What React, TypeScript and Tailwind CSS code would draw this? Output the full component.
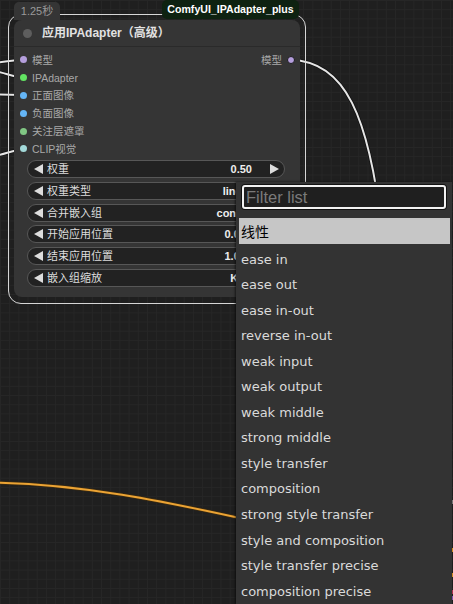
import React from "react";

const inputs = [
  { label: "模型", dot: "bg-[#b59fdd]" },
  { label: "IPAdapter", dot: "bg-[#62e462]" },
  { label: "正面图像", dot: "bg-[#64b5f6]" },
  { label: "负面图像", dot: "bg-[#64b5f6]" },
  { label: "关注层遮罩", dot: "bg-[#81c784]" },
  { label: "CLIP视觉", dot: "bg-[#a3d9d9]" },
];

const widgets = [
  { label: "权重", value: "0.50" },
  { label: "权重类型", value: "linear" },
  { label: "合并嵌入组", value: "concat" },
  { label: "开始应用位置", value: "0.000" },
  { label: "结束应用位置", value: "1.000" },
  { label: "嵌入组缩放", value: "K+V" },
];

const options = [
  "ease in",
  "ease out",
  "ease in-out",
  "reverse in-out",
  "weak input",
  "weak output",
  "weak middle",
  "strong middle",
  "style transfer",
  "composition",
  "strong style transfer",
  "style and composition",
  "style transfer precise",
  "composition precise",
];

function Wires() {
  return (
    <svg className="absolute inset-0 h-full w-full" viewBox="0 0 453 604" fill="none">
      {/* input links coming from the left */}
      <g strokeLinecap="round">
        {[
          "M-4 62.5 C6 62, 12 60, 23 60",
          "M-4 71.5 C6 73, 12 77, 23 77.5",
          "M-4 94.5 L23 95",
          "M-4 155.5 C6 154, 12 150, 23 149.5",
        ].map((d) => (
          <g key={d}>
            <path d={d} stroke="#111" strokeWidth="3.5" />
            <path d={d} stroke="#e6e6e6" strokeWidth="2" />
          </g>
        ))}
        <path d="M291 60 C345 61, 369 116, 382 230" stroke="#111" strokeWidth="3.5" />
        <path d="M291 60 C345 61, 369 116, 382 230" stroke="#e6e6e6" strokeWidth="2" />
        <path d="M-6 482.5 C80 484, 160 500, 262 523" stroke="#3a2a10" strokeWidth="3.5" />
        <path d="M-6 482.5 C80 484, 160 500, 262 523" stroke="#eba334" strokeWidth="2" />
      </g>
    </svg>
  );
}

function LeftArrow() {
  return (
    <svg width="9" height="10" viewBox="0 0 9 10" className="shrink-0">
      <polygon points="9,0 9,10 0,5" fill="#dddddd" />
    </svg>
  );
}

function RightArrow() {
  return (
    <svg width="9" height="10" viewBox="0 0 9 10" className="shrink-0">
      <polygon points="0,0 0,10 9,5" fill="#dddddd" />
    </svg>
  );
}

function Node() {
  return (
    <>
      {/* selection outline */}
      <div className="absolute left-[8px] top-[14px] h-[290px] w-[298px] rounded-[13px] border border-[#d6d6d6]" />

      {/* execution time badge */}
      <div className="absolute left-[14px] top-[2px] flex h-[18px] w-[46px] items-center justify-center rounded-t-[5px] bg-[#353535] text-[11px] text-[#9a9a9a]">
        1.25秒
      </div>

      {/* source badge */}
      <div className="absolute left-[162px] top-0 flex h-[19px] w-[137px] items-center justify-center rounded-[5px] bg-[#0e2211] text-[10.6px] font-bold text-white">
        ComfyUI_IPAdapter_plus
      </div>

      <div className="absolute left-[14px] top-[20px] flex h-[277px] w-[286px] flex-col rounded-[8px] bg-[#353535]">
        <div className="flex h-[27px] shrink-0 items-center gap-[10px] border-b border-[#2a2a2a] pl-[9px]">
          <span className="h-[9px] w-[9px] rounded-full bg-[#5e5e5e]" />
          <span className="text-[12px] font-bold text-[#e2e2e2]">应用IPAdapter（高级）</span>
        </div>

        <div className="flex justify-between pt-[4px]">
          <div className="flex flex-col">
            {inputs.map((i) => (
              <div key={i.label} className="flex h-[17.8px] items-center gap-[5.5px] pl-[5.5px]">
                <span className={`h-[7px] w-[7px] rounded-full ${i.dot}`} />
                <span className="text-[10.5px] leading-[14px] text-[#a8a8a8]">{i.label}</span>
              </div>
            ))}
          </div>
          <div className="flex h-[17.8px] items-center gap-[5px] pr-[5px]">
            <span className="text-[10.5px] leading-[14px] text-[#a8a8a8]">模型</span>
            <span className="h-[8px] w-[8px] rounded-full border border-[#1a1a1a] bg-[#b59fdd]" />
          </div>
        </div>

        <div className="mt-[2.2px] flex flex-col gap-[3.8px] pl-[13px] pr-[15px]">
          {widgets.map((w) => (
            <div
              key={w.label}
              className="flex h-[18px] items-center rounded-full border border-[#575757] bg-[#222222] pl-[6px] pr-[5px]"
            >
              <LeftArrow />
              <span className="ml-[4px] text-[11px] leading-[14px] text-[#dddddd]">{w.label}</span>
              <span className="ml-auto mr-[18px] text-[11px] leading-[14px] font-semibold text-[#eeeeee]">{w.value}</span>
              <RightArrow />
            </div>
          ))}
        </div>
      </div>
    </>
  );
}

function Menu() {
  return (
    <div className="absolute bottom-0 left-[236px] top-[182px] w-[216px] overflow-hidden bg-[#333333] shadow-[-1px_0_2px_rgba(0,0,0,0.6)] font-['DejaVu_Sans','Noto_Sans_CJK_SC',sans-serif]">
      <div className="ml-[6px] mt-[3px] flex h-[24px] w-[204px] items-center rounded-[3px] border-2 border-[#f2f2f2] bg-[#1f1f1f] pl-[2px] font-['Liberation_Sans',sans-serif] text-[16.5px] leading-[18px] text-[#7a7a7a] shadow-[0_0_0_1px_#111]">
        Filter list
      </div>
      <div className="mt-[9px] flex flex-col pl-[3px] pr-[2px]">
        <div className="flex h-[25.5px] items-center bg-[#c6c6c6] pl-[2px] font-['Noto_Sans_CJK_SC',sans-serif] text-[14px] leading-[18px] text-black">
          线性
        </div>
        <div className="mt-[3px] flex flex-col">
          {options.map((o) => (
            <div key={o} className="h-[25.55px] pl-[2px] text-[13px] leading-[25px] text-[#dadada]">
              {o}
            </div>
          ))}
        </div>
      </div>
    </div>
  );
}

export default function App() {
  return (
    <div className="relative h-[604px] w-full overflow-hidden bg-[#1f1f1f] bg-[linear-gradient(to_right,#262626_1px,transparent_1px),linear-gradient(to_bottom,#262626_1px,transparent_1px)] bg-[size:9.2px_9.2px] font-['Liberation_Sans','Noto_Sans_CJK_SC',sans-serif]">
      <Wires />
      <Node />
      <Menu />
      {/* bits of another node peeking at the right edge */}
      <div className="absolute right-0 top-[500px] h-[4px] w-[1px] bg-[#777]" />
      <div className="absolute right-0 top-[548px] h-[4px] w-[1px] bg-[#d08a20]" />
      <div className="absolute right-0 top-[573px] h-[4px] w-[1px] bg-[#d08a20]" />
      <div className="absolute right-0 top-[590px] h-[4px] w-[1px] bg-[#b03050]" />
      <div className="absolute right-0 top-[596px] h-[4px] w-[1px] bg-[#8050b0]" />
    </div>
  );
}
